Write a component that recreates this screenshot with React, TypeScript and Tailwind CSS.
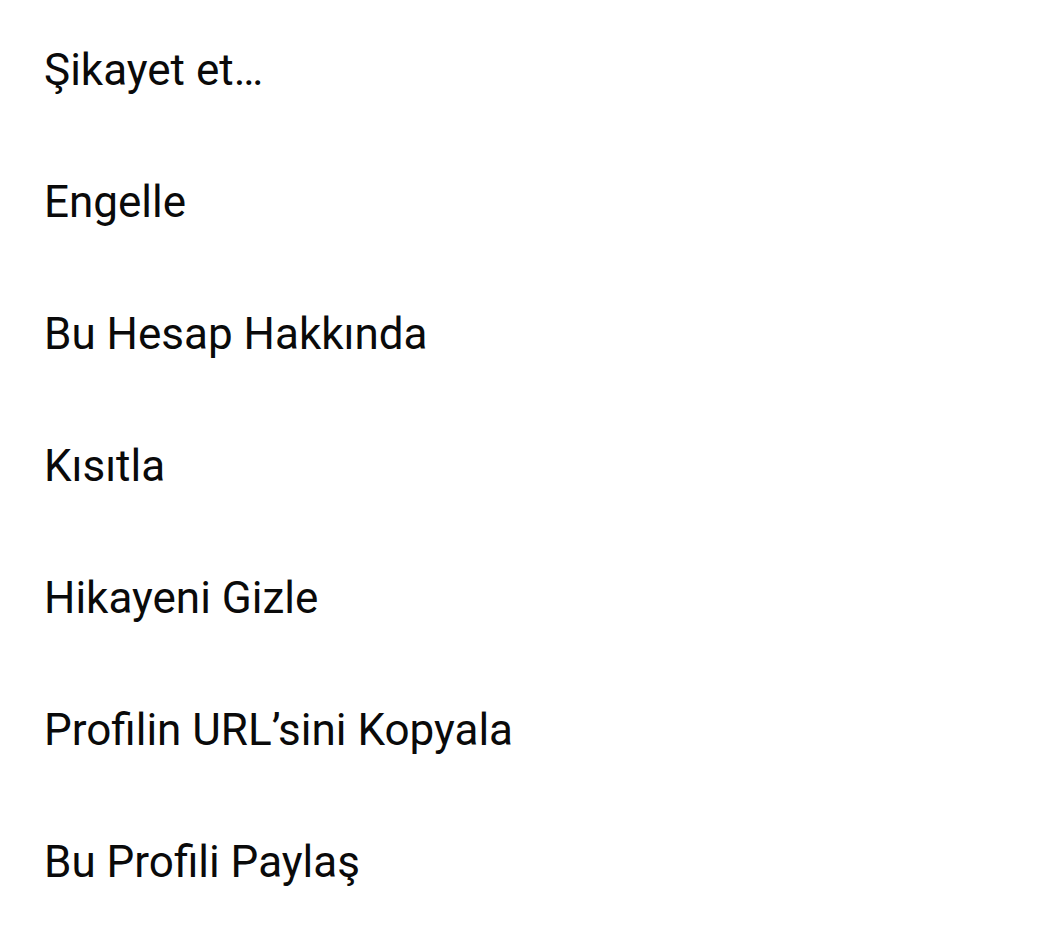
const items = [
  "Şikayet et…",
  "Engelle",
  "Bu Hesap Hakkında",
  "Kısıtla",
  "Hikayeni Gizle",
  "Profilin URL’sini Kopyala",
  "Bu Profili Paylaş",
];

const App = () => {
  return (
    <div className="min-h-screen w-full bg-white pt-[4px] font-['Roboto',sans-serif]">
      <ul className="flex flex-col">
        {items.map((item) => (
          <li
            key={item}
            className="flex h-[132px] items-center pl-[44px] text-[44px] leading-none text-[#0a0a0a]"
          >
            {item}
          </li>
        ))}
      </ul>
    </div>
  );
};

export default App;
